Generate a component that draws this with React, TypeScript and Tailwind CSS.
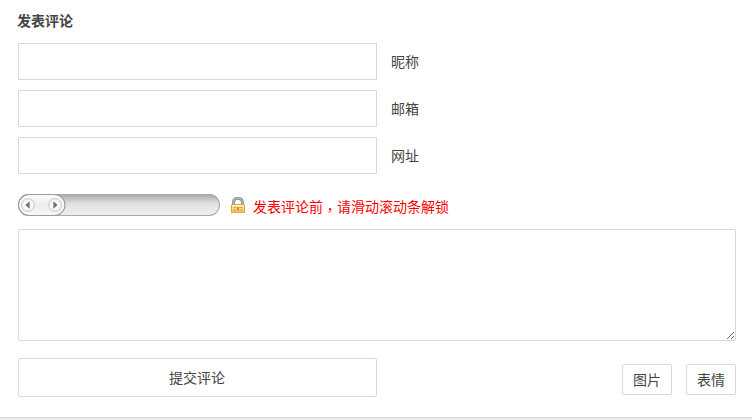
import { useState } from 'react'

const fields = [
  { name: 'author', label: '昵称' },
  { name: 'email', label: '邮箱' },
  { name: 'url', label: '网址' },
]

function ArrowKnob({ cx, flip }: { cx: number; flip?: boolean }) {
  return (
    <g transform={`translate(${cx} 11)${flip ? ' scale(-1 1)' : ''}`}>
      <circle r="6.3" fill="#f8f8f8" stroke="#c4c4c4" />
      <path d="M-2.6 0L1.6 -3.8V3.8Z" fill="#707070" />
    </g>
  )
}

function SlideHandle() {
  return (
    <svg className="block h-[22px] w-12" viewBox="0 0 48 22">
      <defs>
        <linearGradient id="handle" x1="0" y1="0" x2="0" y2="1">
          <stop offset="0" stopColor="#fafafa" />
          <stop offset="0.5" stopColor="#eee" />
          <stop offset="1" stopColor="#f6f6f6" />
        </linearGradient>
      </defs>
      <rect x="0.6" y="0.6" width="46.3" height="20.8" rx="10.4" fill="url(#handle)" stroke="#9c9c9c" strokeWidth="1.2" />
      <rect x="1.8" y="1.8" width="43.9" height="18.4" rx="9.2" fill="none" stroke="#fff" />
      <ArrowKnob cx={10} />
      <ArrowKnob cx={37} flip />
    </svg>
  )
}

function LockIcon() {
  return (
    <svg className="block h-4 w-4" viewBox="0 0 16 16">
      <defs>
        <linearGradient id="lock" x1="0" y1="0" x2="0" y2="1">
          <stop offset="0" stopColor="#fdeeb4" />
          <stop offset="0.5" stopColor="#fbdc7c" />
          <stop offset="1" stopColor="#f0b440" />
        </linearGradient>
      </defs>
      <path d="M3.5 8V5.4A4.5 4.2 0 0 1 12.5 5.4V8" fill="none" stroke="#8c8c8c" strokeWidth="3" />
      <path d="M3.5 8V5.4A4.5 4.2 0 0 1 12.5 5.4V8" fill="none" stroke="#bdbdbd" strokeWidth="1.2" />
      <rect x="1.5" y="7.5" width="13" height="8.5" rx="0.6" fill="url(#lock)" stroke="#dba03a" />
      <path d="M2.5 8.5H13.5" stroke="#fff6cf" />
      <path d="M3.5 10.5H6.5M9.5 10.5H12.5M3.5 13H6.5M9.5 13H12.5" stroke="#d0a04a" />
      <path d="M7.2 10H8.8V13.5H7.2Z" fill="#b5832c" />
    </svg>
  )
}

export default function App() {
  const [comment, setComment] = useState('')

  return (
    <div className="h-[420px] w-[752px] overflow-hidden bg-[#ebebeb] font-['Liberation_Sans','Noto_Sans_CJK_SC',sans-serif] text-sm text-[#444]">
      <form className="h-[418px] border-b border-[#d6d6d6] bg-white pr-4 pl-[18px]" onSubmit={(e) => e.preventDefault()}>
        <h3 className="-ml-px h-[43px] pt-[11px] leading-5 font-bold">发表评论</h3>

        <div className="flex flex-col gap-2.5">
          {fields.map((f) => (
            <label key={f.name} className="flex h-[37px] items-center gap-3.5">
              <input name={f.name} className="h-full w-[359px] border border-[#d9d9d9] px-2 outline-none" />
              <span className="leading-5">{f.label}</span>
            </label>
          ))}
        </div>

        {/* Slide to unlock */}
        <div className="mt-5 flex h-[22px] items-center">
          <div className="h-[22px] w-[202px] rounded-full bg-linear-to-b from-[#a8a8a8] via-[#e2e2e2] via-45% to-[#f0f0f0] shadow-[inset_0_0_0_1px_#aaa]">
            <SlideHandle />
          </div>
          <div className="ml-2.5">
            <LockIcon />
          </div>
          <span className="mt-1 ml-[7px] leading-5 text-[#f00]">
            发表评论前<span className="align-[-3px] font-['Noto_Sans_CJK_TC',sans-serif] leading-none">，</span>请滑动滚动条解锁
          </span>
        </div>

        <textarea
          value={comment}
          onChange={(e) => setComment(e.target.value)}
          className="mt-[13px] block h-[112px] w-[718px] resize rounded-[2px] border border-[#d9d9d9] p-2 outline-none"
        />

        <div className="mt-[17px] flex items-start justify-between">
          <button type="submit" className="h-[39px] w-[359px] rounded-[2px] border border-[#d9d9d9] pr-px">
            提交评论
          </button>
          <div className="mt-1.5 flex gap-3.5">
            <button type="button" className="h-[31px] w-[50px] rounded-[2px] border border-[#d9d9d9]">图片</button>
            <button type="button" className="h-[31px] w-[50px] rounded-[2px] border border-[#d9d9d9]">表情</button>
          </div>
        </div>
      </form>
    </div>
  )
}
